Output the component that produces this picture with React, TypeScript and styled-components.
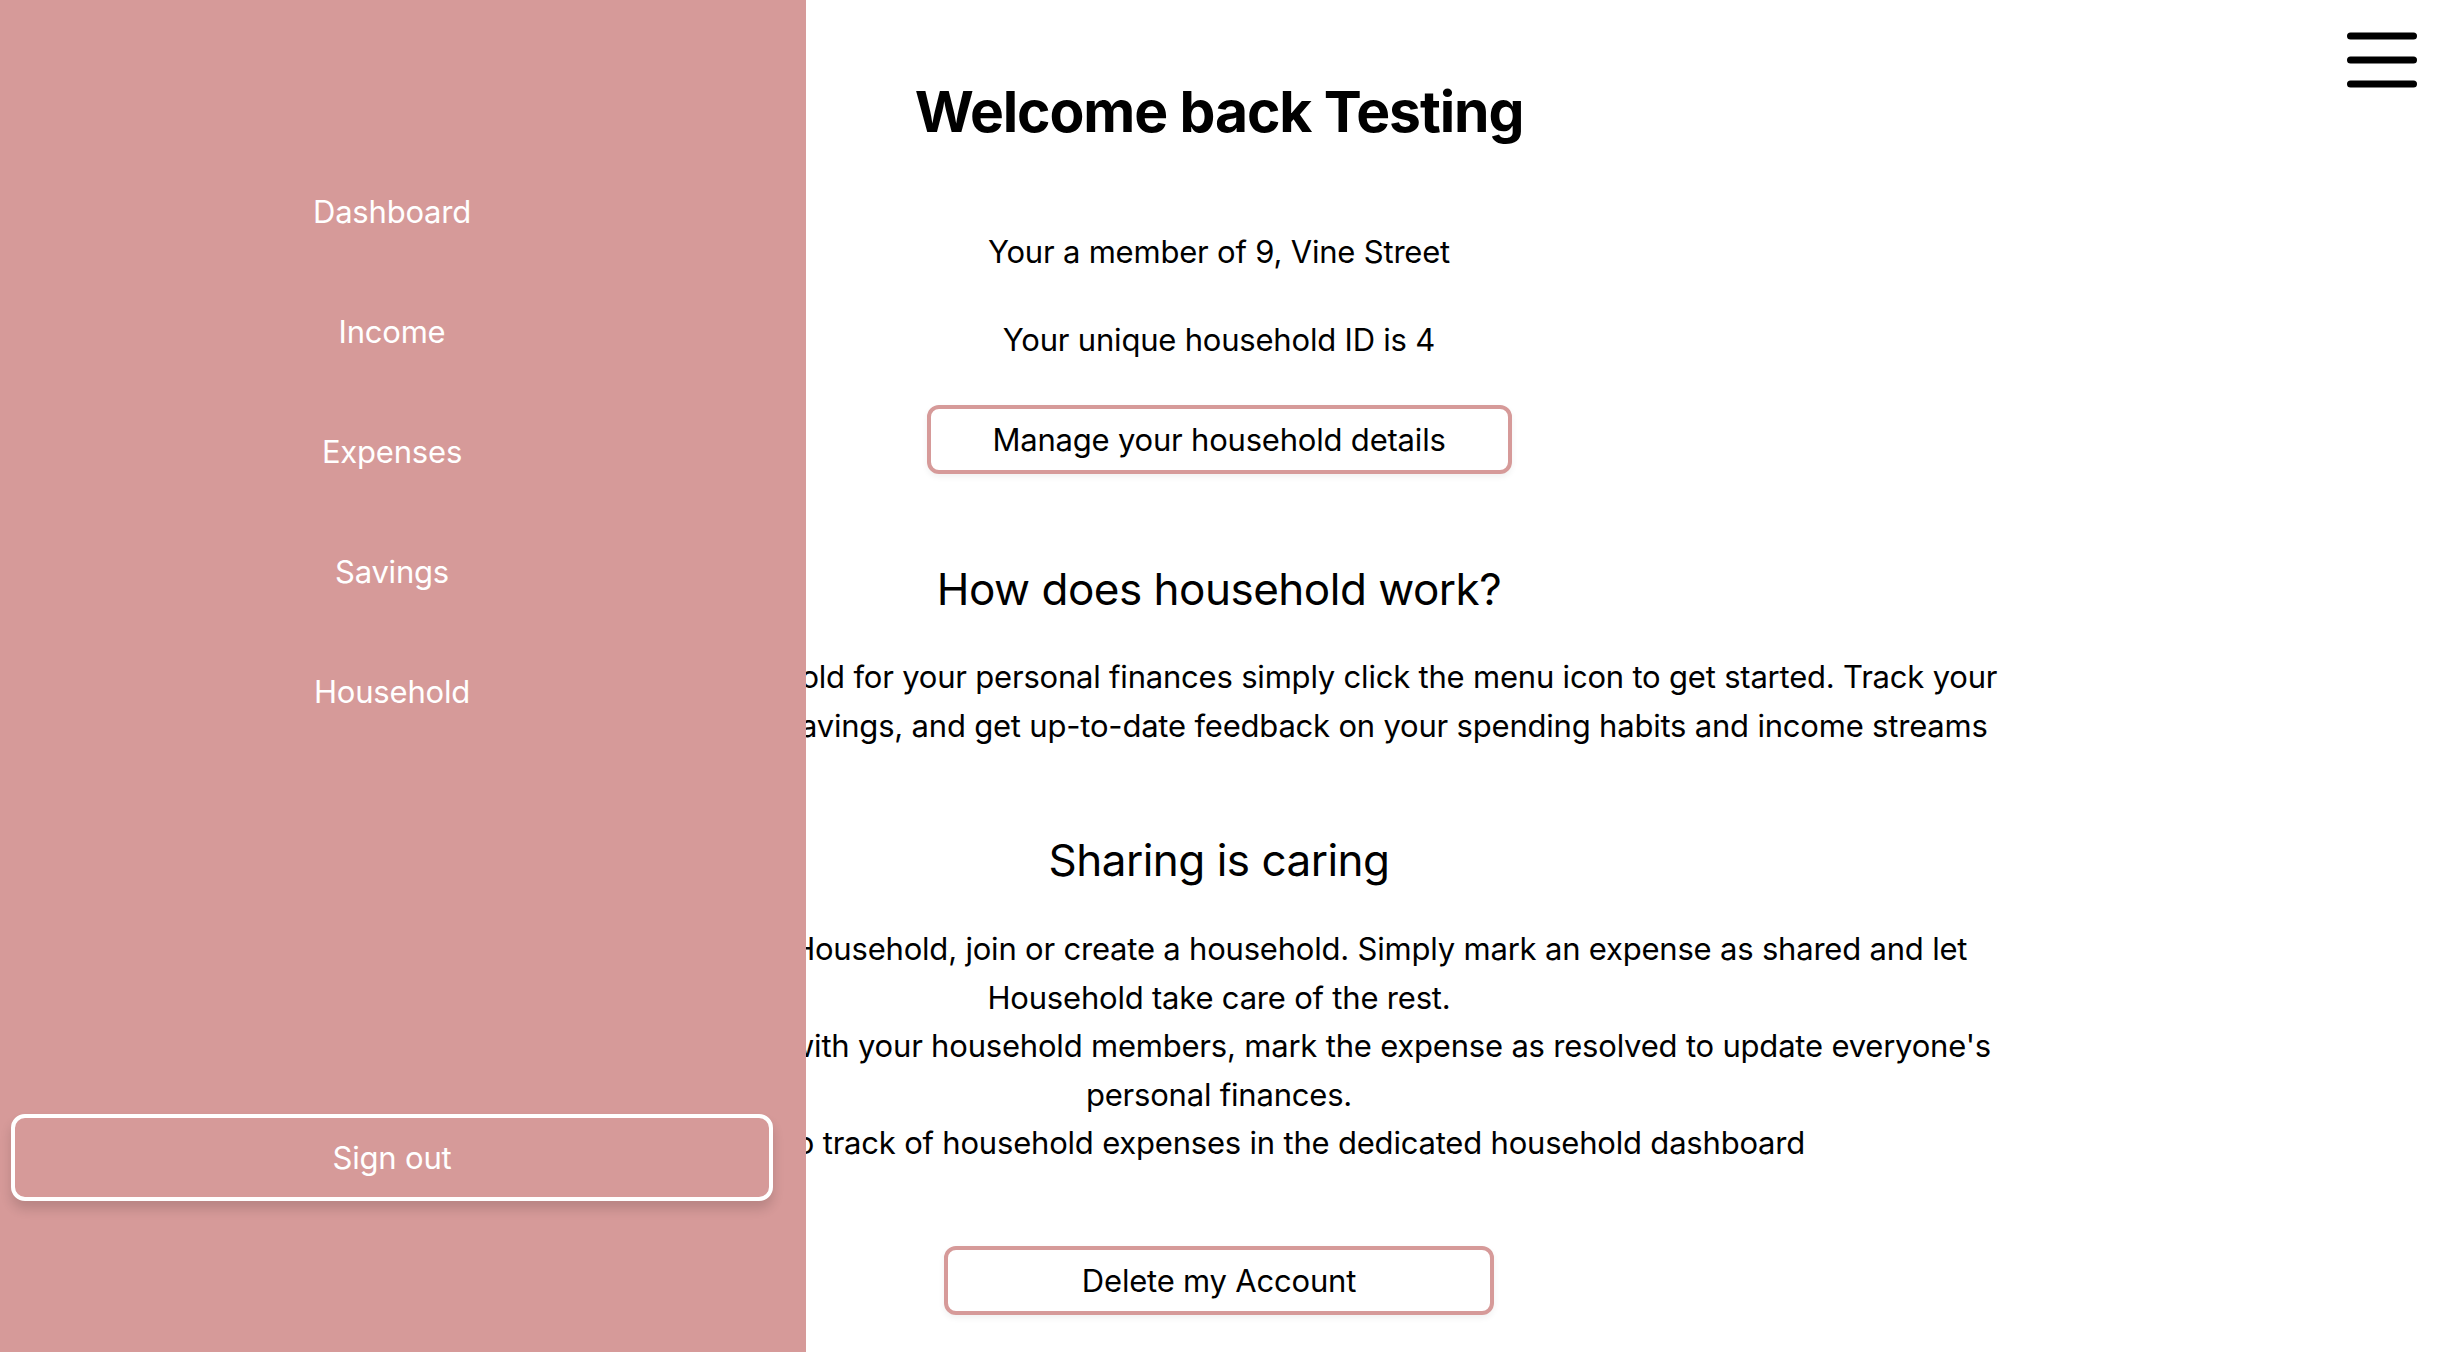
import * as React from 'react';
import styled, { createGlobalStyle } from 'styled-components';

const pink = '#d69a99';

const GlobalStyle = createGlobalStyle`
  html, body {
    margin: 0;
    padding: 0;
    background: #ffffff;
    font-family: Inter, "Noto Sans", "Liberation Sans", sans-serif;
    color: #000000;
  }
`;

const Page = styled.div`
  position: relative;
  width: 100%;
  min-height: 1352px;
  overflow: hidden;
`;

const Main = styled.main`
  display: flex;
  flex-direction: column;
  align-items: center;
  text-align: center;
  padding: 73px 6px 0 0;
`;

const Title = styled.h1`
  margin: 0;
  font-size: 57px;
  line-height: 78px;
  font-weight: 700;
  letter-spacing: -1.1px;
`;

const Info = styled.p<{ $gap: number }>`
  margin: ${(p) => p.$gap}px 0 0;
  font-size: 31px;
  line-height: 48px;
  letter-spacing: -0.2px;
`;

const Section = styled.h2<{ $gap: number }>`
  margin: ${(p) => p.$gap}px 0 0;
  font-size: 44px;
  line-height: 58px;
  font-weight: 400;
  letter-spacing: -0.5px;
`;

const Body = styled.p<{ $gap: number }>`
  margin: ${(p) => p.$gap}px 0 0;
  font-size: 31px;
  line-height: 48.5px;
  letter-spacing: -0.2px;
  white-space: nowrap;
`;

const OutlineButton = styled.button<{ $width: number; $gap: number }>`
  margin-top: ${(p) => p.$gap}px;
  width: ${(p) => p.$width}px;
  height: 69px;
  box-sizing: border-box;
  background: #ffffff;
  border: 4px solid ${pink};
  border-radius: 12px;
  box-shadow: 0 3px 6px rgba(0, 0, 0, 0.06);
  font-family: inherit;
  font-size: 31px;
  letter-spacing: -0.2px;
  color: #000000;
  cursor: pointer;
`;

const Sidebar = styled.aside`
  position: fixed;
  top: 0;
  left: 0;
  width: 806px;
  height: 100vh;
  box-sizing: border-box;
  padding: 192px 22px 151px 0;
  background: ${pink};
  display: flex;
  flex-direction: column;
  align-items: stretch;
`;

const NavList = styled.nav`
  display: flex;
  flex-direction: column;
  align-items: center;
  gap: 80px;
`;

const NavItem = styled.a`
  font-size: 31px;
  line-height: 40px;
  color: #ffffff;
  text-decoration: none;
  letter-spacing: -0.2px;
`;

const SignOut = styled.button`
  margin: auto 11px 0;
  height: 87px;
  box-sizing: border-box;
  background: ${pink};
  border: 4px solid #ffffff;
  border-radius: 14px;
  box-shadow: 0 8px 12px rgba(0, 0, 0, 0.14);
  color: #ffffff;
  font-family: inherit;
  font-size: 31px;
  letter-spacing: -0.2px;
  cursor: pointer;
`;

const MenuButton = styled.button`
  position: absolute;
  top: 28px;
  right: 23px;
  width: 78px;
  height: 64px;
  padding: 0;
  border: none;
  background: transparent;
  cursor: pointer;
`;

const navLinks = ['Dashboard', 'Income', 'Expenses', 'Savings', 'Household'];

export default function App() {
  return (
    <Page>
      <GlobalStyle />
      <Main>
        <Title>Welcome back Testing</Title>
        <Info $gap={77}>Your a member of 9, Vine Street</Info>
        <Info $gap={40}>Your unique household ID is 4</Info>
        <OutlineButton $width={585} $gap={41}>Manage your household details</OutlineButton>

        <Section $gap={86}>How does household work?</Section>
        <Body $gap={35}>
          Welcome to your household for your personal finances simply click the menu icon to get started. Track your
          <br />
          income, expenses and savings, and get up-to-date feedback on your spending habits and income streams
        </Body>

        <Section $gap={81}>Sharing is caring</Section>
        <Body $gap={36}>
          To start sharing using Household, join or create a household. Simply mark an expense as shared and let
          <br />
          Household take care of the rest.
          <br />
          Once you've settled up with your household members, mark the expense as resolved to update everyone's
          <br />
          personal finances.
          <br />
          Keep tabs to track of household expenses in the dedicated household dashboard
        </Body>

        <OutlineButton $width={550} $gap={78}>Delete my Account</OutlineButton>
      </Main>

      <MenuButton aria-label="Menu">
        <svg width="78" height="64" viewBox="0 0 78 64">
          <g stroke="#000" strokeWidth="7" strokeLinecap="round">
            <line x1="7.5" y1="8" x2="70.5" y2="8" />
            <line x1="7.5" y1="32" x2="70.5" y2="32" />
            <line x1="7.5" y1="56" x2="70.5" y2="56" />
          </g>
        </svg>
      </MenuButton>

      <Sidebar>
        <NavList>
          {navLinks.map((l) => (
            <NavItem key={l} href="#">
              {l}
            </NavItem>
          ))}
        </NavList>
        <SignOut>Sign out</SignOut>
      </Sidebar>
    </Page>
  );
}
